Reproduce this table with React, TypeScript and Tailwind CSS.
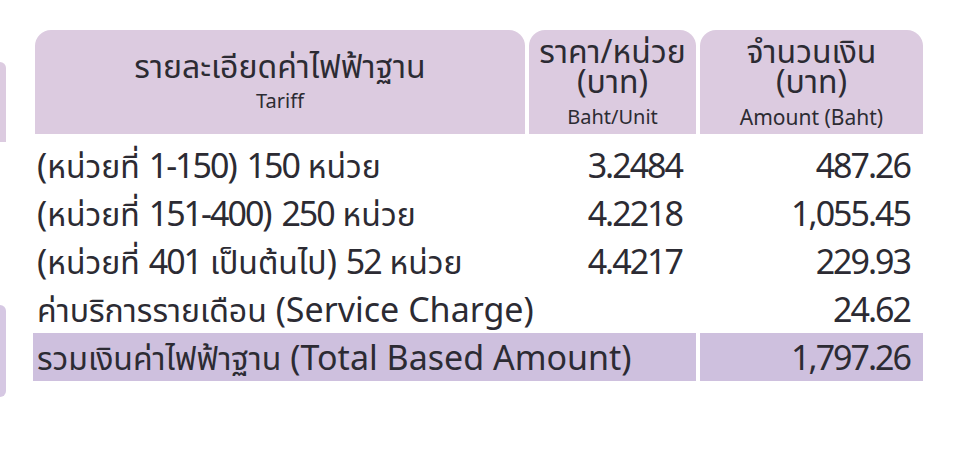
const rows = [
  { label: "(หน่วยที่ 1-150) 150 หน่วย", rate: "3.2484", amount: "487.26" },
  { label: "(หน่วยที่ 151-400) 250 หน่วย", rate: "4.2218", amount: "1,055.45" },
  { label: "(หน่วยที่ 401 เป็นต้นไป) 52 หน่วย", rate: "4.4217", amount: "229.93" },
];

const font = {
  fontFamily: '"Noto Sans", "Noto Sans Thai", "Noto Sans Thai Looped", Tahoma, sans-serif',
};

// the bill's face has narrow figures and slightly smaller Thai, so runs get tuned
const Label = ({ text }: { text: string }) => (
  <>
    {text.split(/([\u0E00-\u0E7F]+|[\d.,-]+)/).map((part, i) => {
      if (/[\u0E00-\u0E7F]/.test(part))
        return (
          <span key={i} className="text-[32px]">
            {part}
          </span>
        );
      if (/\d/.test(part))
        return (
          <span key={i} className="tracking-[-2px]">
            {part}
          </span>
        );
      return <span key={i}>{part}</span>;
    })}
  </>
);

export default function App() {
  return (
    <div
      className="flex h-[462px] w-[960px] overflow-hidden bg-white text-[#2c2b33]"
      style={font}
    >
      {/* cut-off cards on the left edge */}
      <div className="flex w-[6px] flex-col">
        <div className="mt-[62px] h-[80px] rounded-tr-[6px] bg-[#dccbe0]" />
        <div className="mt-[163px] h-[92px] rounded-r-[6px] bg-[#d6c8e3]" />
      </div>

      <div className="ml-[29px] mt-[30px] w-[888px]">
        <div className="grid h-[104px] grid-cols-[490px_167px_223px] gap-x-[4px]">
          <div className="flex flex-col items-center rounded-t-[16px] bg-[#dccbe0] pt-[18px]">
            <span className="text-[32px] leading-[36px]">รายละเอียดค่าไฟฟ้าฐาน</span>
            <span className="mt-[4px] text-[20px] leading-[26px]">Tariff</span>
          </div>
          <div className="flex flex-col items-center rounded-t-[16px] bg-[#dccbe0] pt-[6px]">
            <span className="text-[32px] leading-[30px]">ราคา/หน่วย</span>
            <span className="text-[32px] leading-[30px]">(บาท)</span>
            <span className="mt-[8px] text-[20px] leading-[26px]">Baht/Unit</span>
          </div>
          <div className="flex flex-col items-center rounded-t-[16px] bg-[#dccbe0] pt-[6px]">
            <span className="text-[32px] leading-[30px]">จำนวนเงิน</span>
            <span className="text-[32px] leading-[30px]">(บาท)</span>
            <span className="mt-[8px] text-[21px] leading-[26px]">Amount (Baht)</span>
          </div>
        </div>

        <div className="mt-[7px] grid auto-rows-[48px] grid-cols-[490px_167px_223px] gap-x-[4px] text-[34px] leading-[48px]">
          {rows.map((row) => (
            <div key={row.rate} className="contents">
              <div className="whitespace-nowrap pl-[2px]">
                <Label text={row.label} />
              </div>
              <div className="pr-[14px] text-right tracking-[-2px]">{row.rate}</div>
              <div className="pr-[13px] text-right tracking-[-2px]">{row.amount}</div>
            </div>
          ))}
          <div className="col-span-2 whitespace-nowrap pl-[2px]">
            <Label text="ค่าบริการรายเดือน (Service Charge)" />
          </div>
          <div className="pr-[13px] text-right tracking-[-2px]">24.62</div>
          <div className="col-span-2 -ml-[2px] whitespace-nowrap bg-[#cec0de] pl-[4px]">
            <Label text="รวมเงินค่าไฟฟ้าฐาน (Total Based Amount)" />
          </div>
          <div className="bg-[#cec0de] pr-[13px] text-right tracking-[-2px]">1,797.26</div>
        </div>
      </div>
    </div>
  );
}
